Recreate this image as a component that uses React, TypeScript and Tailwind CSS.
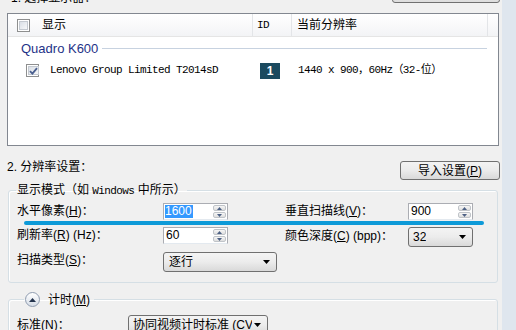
import React from "react";

/* ---------- small Win7-style controls ---------- */

const Check: React.FC<{ checked?: boolean }> = ({ checked }) => (
  <span className="w-[13px] h-[13px] shrink-0 border border-[#8e8f8f] bg-white p-[1px] flex">
    <span className="flex-1 border border-[#c4c9d0] bg-linear-to-br from-[#dadfe6] to-[#f7f8f9] flex items-center justify-center">
      {checked && (
        <svg width="9" height="8" viewBox="0 0 9 8">
          <path d="M1 4.2 L3.4 6.6 L8 1.2" fill="none" stroke="#4a5f8f" strokeWidth="1.8" />
        </svg>
      )}
    </span>
  </span>
);

const Arrow: React.FC<{ up?: boolean }> = ({ up }) => (
  <svg width="5" height="3" viewBox="0 0 5 3">
    <path d={up ? "M0 3 L2.5 0 L5 3Z" : "M0 0 L2.5 3 L5 0Z"} fill="#4d6185" />
  </svg>
);

const NumberBox: React.FC<{ value: string; selected?: boolean }> = ({ value, selected }) => (
  <div className="w-[65px] h-[17px] shrink-0 flex border border-[#abadb3] border-b-[#e3e9ef] bg-white">
    <div className="flex-1 flex items-center pl-[1px] text-[12px] leading-[13px]">
      <span className={selected ? "bg-[#3399ff] text-white pr-[1px]" : "pl-[1px]"}>{value}</span>
    </div>
    <div className="w-[15px] flex flex-col gap-[1px] p-[1px]">
      <div className="flex-1 flex items-center justify-center border border-[#c0c4c9] rounded-[2px] bg-linear-to-b from-[#f6f6f6] to-[#dedede]">
        <Arrow up />
      </div>
      <div className="flex-1 flex items-center justify-center border border-[#c0c4c9] rounded-[2px] bg-linear-to-b from-[#f6f6f6] to-[#dedede]">
        <Arrow />
      </div>
    </div>
  </div>
);

const Select: React.FC<{ value: string; className: string }> = ({ value, className }) => (
  <div
    className={
      "h-[20px] shrink-0 flex items-center justify-between pl-[4px] pr-[6px] border border-[#707070] rounded-[3px] bg-linear-to-b from-[#f4f4f4] via-[#ececec] to-[#d9d9d9] text-[12px] overflow-hidden whitespace-nowrap " +
      className
    }
  >
    <span className="overflow-hidden">{value}</span>
    <svg width="7" height="4" viewBox="0 0 7 4" className="shrink-0 ml-[2px]">
      <path d="M0 0 L7 0 L3.5 4Z" fill="#000" />
    </svg>
  </div>
);

/* ---------- monitor list ---------- */

const MonitorList: React.FC = () => (
  <div className="w-[492px] h-[133px] shrink-0 border border-[#828790] bg-white flex flex-col">
    {/* header */}
    <div className="h-[23px] shrink-0 flex bg-linear-to-b from-white to-[#f3f4f6] border-b border-[#e5e5e5]">
      <div className="w-[245px] flex items-center pl-[9px] gap-[12px] border-r border-[#e3e5e8]">
        <Check />
        <span>显示</span>
      </div>
      <div className="w-[39px] flex items-center pl-[4px] border-r border-[#e3e5e8] font-['Liberation_Mono',monospace] text-[11px] tracking-[-0.6px]">
        ID
      </div>
      <div className="w-[196px] flex items-center pl-[5px] border-r border-[#e3e5e8]">当前分辨率</div>
      <div className="flex-1" />
    </div>

    {/* group */}
    <div className="h-[21px] shrink-0 mt-[1px] flex items-center pl-[13px] pr-[4px]">
      <span className="font-['Liberation_Sans',sans-serif] text-[13px] text-[#1e3287]">Quadro K600</span>
      <span className="flex-1 h-px bg-[#c7d2e0] ml-[4px] mr-[7px]" />
    </div>

    {/* row */}
    <div className="h-[17px] shrink-0 mt-[3px] flex items-center">
      <div className="w-[245px] flex items-center pl-[18px] gap-[11px]">
        <Check checked />
        <span className="font-['Liberation_Mono',monospace] text-[11px] tracking-[-0.6px]">
          Lenovo Group Limited T2014sD
        </span>
      </div>
      <div className="w-[39px] pl-[7px] flex">
        <span className="w-[20px] h-[16px] bg-[#1b4a5f] text-white font-bold text-[12px] flex items-center justify-center font-['Liberation_Sans',sans-serif]">
          1
        </span>
      </div>
      <div className="pl-[6px] font-['Liberation_Mono','Noto_Sans_CJK_SC',monospace] text-[11px] tracking-[-0.6px]">
        1440 x 900，60Hz（32-位）
      </div>
    </div>
  </div>
);

/* ---------- resolution settings ---------- */

const Label: React.FC<{ children: React.ReactNode; className?: string }> = ({ children, className }) => (
  <span className={"shrink-0 text-[12px] leading-[17px] whitespace-nowrap " + (className ?? "")}>{children}</span>
);

const DisplayMode: React.FC = () => (
  <fieldset className="ml-[1px] w-[490px] shrink-0 border border-[#d5dfe5] rounded-[3px] shadow-[inset_1px_1px_0_#ffffff] pl-[8px] pt-[5px] pb-[10px]">
    <legend className="ml-[-1px] px-[1px] text-[12px] leading-[14px]">
      显示模式（如 <span className="font-['Liberation_Mono',monospace] text-[11px] tracking-[-0.6px]">Windows</span> 中所示）
    </legend>

    <div className="flex items-center h-[17px]">
      <Label className="w-[146px]">
        水平像素(<u>H</u>)：
      </Label>
      <NumberBox value="1600" selected />
      <span className="w-[57px] shrink-0" />
      <Label className="w-[123px]">
        垂直扫描线(<u>V</u>)：
      </Label>
      <NumberBox value="900" />
    </div>

    <div className="ml-[7px] mt-[1px] w-[460px] h-[4px] rounded-full bg-[#0d9ad8]" />

    <div className="flex items-start h-[20px] mt-[2px]">
      <Label className="w-[146px]">
        刷新率(<u>R</u>) (Hz)：
      </Label>
      <NumberBox value="60" />
      <span className="w-[57px] shrink-0" />
      <Label className="w-[123px] leading-[19px]">
        颜色深度(<u>C</u>) (bpp)：
      </Label>
      <Select value="32" className="w-[65px]" />
    </div>

    <div className="flex items-start h-[20px] mt-[5px]">
      <Label className="w-[146px] leading-[13px]">
        扫描类型(<u>S</u>)：
      </Label>
      <Select value="逐行" className="w-[114px] pl-[5px]" />
    </div>
  </fieldset>
);

const Timing: React.FC = () => (
  <fieldset className="ml-[1px] mt-[9px] w-[490px] h-[60px] shrink-0 border border-[#d5dfe5] rounded-[3px] shadow-[inset_1px_1px_0_#ffffff] pl-[8px] pt-[8px]">
    <legend className="ml-[7px] px-[1px] flex items-center gap-[8px] h-[15px]">
      <span className="w-[15px] h-[15px] rounded-full border border-[#8f9cb0] bg-linear-to-b from-[#ffffff] to-[#d6dde7] flex items-center justify-center">
        <svg width="7" height="4" viewBox="0 0 7 4">
          <path d="M0 4 L3.5 0 L7 4Z" fill="#24344e" />
        </svg>
      </span>
      <span className="text-[12px] leading-[14px] pr-[3px]">
        计时(<u>M</u>)
      </span>
    </legend>
    <div className="flex items-center h-[20px]">
      <Label className="w-[111px]">
        标准(<u>N</u>)：
      </Label>
      <Select value="协同视频计时标准 (CVT)" className="w-[140px]" />
    </div>
  </fieldset>
);

/* ---------- page ---------- */

export default function App() {
  return (
    <div className="w-[516px] h-[330px] overflow-hidden flex bg-[#f0f0f0] text-black font-['Liberation_Sans','Noto_Sans_CJK_SC',sans-serif] text-[12px]">
      <div className="w-[502px] shrink-0 pl-[7px] flex flex-col">
        {/* section 1 title, cut off at top */}
        <div className="h-[13px] shrink-0 flex items-start justify-between">
          <span className="-mt-[9px] leading-[14px] ml-[4px]">1. 选择显示器：</span>
          <span className="-mt-[17px] mr-[2px] w-[108px] h-[20px] rounded-[3px] border border-[#707070] bg-linear-to-b from-[#f2f2f2] to-[#dddddd]" />
        </div>

        <MonitorList />

        {/* section 2 title */}
        <div className="h-[19px] shrink-0 mt-[15px] flex items-start justify-between">
          <span className="-mt-[1px] leading-[14px]">2. 分辨率设置：</span>
          <span className="mr-[2px] w-[100px] h-[19px] rounded-[3px] border border-[#707070] bg-linear-to-b from-[#f3f3f3] via-[#ebebeb] to-[#d9d9d9] flex items-center justify-center text-[12px]">
            导入设置(<u>P</u>)
          </span>
        </div>

        <div className="mt-[3px] shrink-0">
          <DisplayMode />
        </div>
        <Timing />
      </div>
      <div className="flex-1 bg-[#dfe6ee]" />
    </div>
  );
}
